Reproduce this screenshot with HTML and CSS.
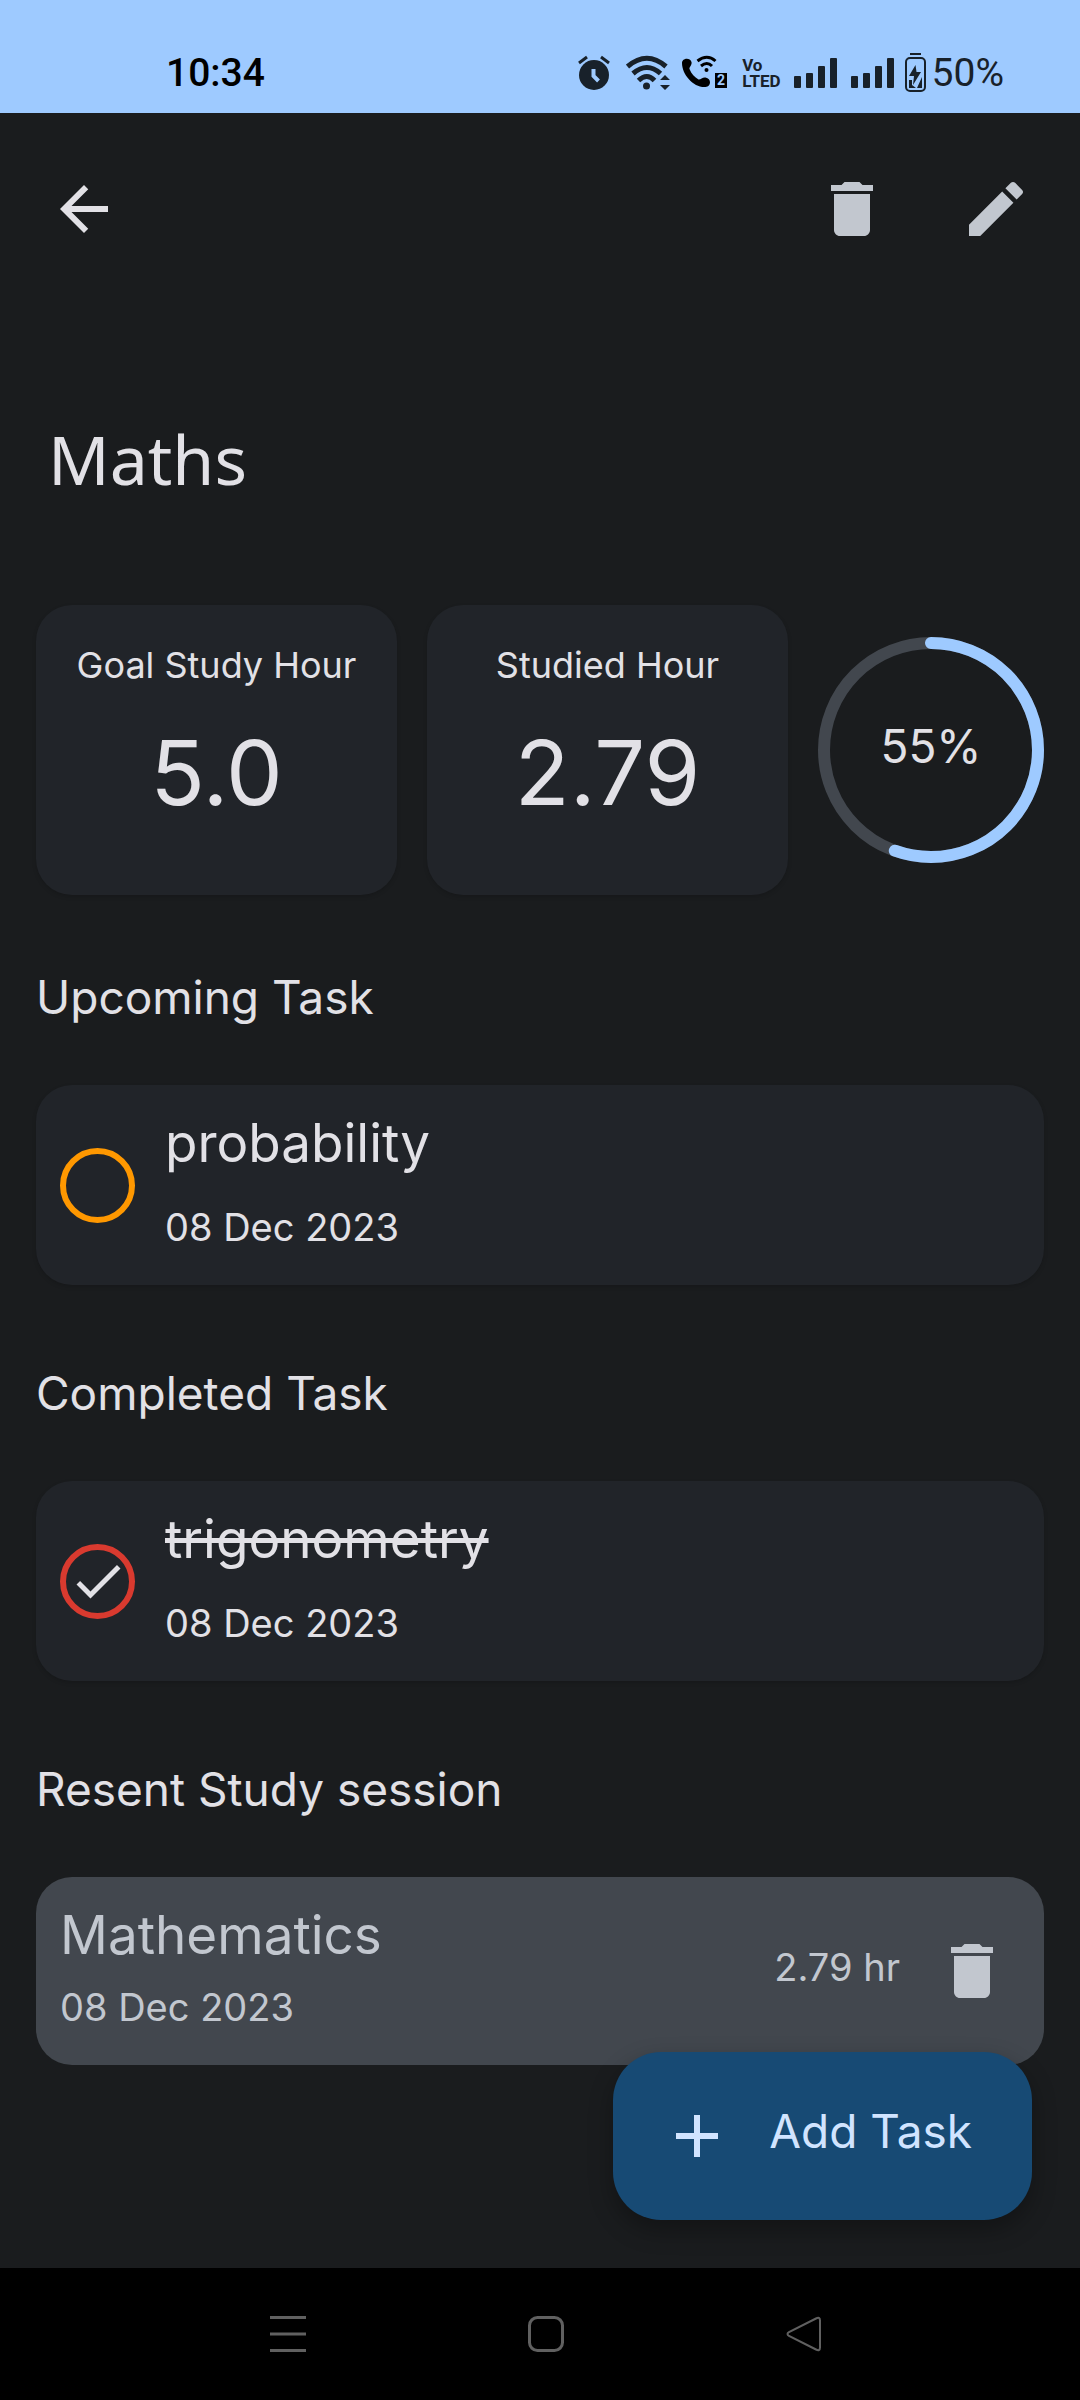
FILE: index.html
```html
<!DOCTYPE html>
<html lang="en">
<head>
<meta charset="utf-8">
<meta name="viewport" content="width=device-width, initial-scale=1">
<title>Maths</title>
<link rel="stylesheet" href="styles.css">
</head>
<body>
<svg class="defs" aria-hidden="true">
  <symbol id="trash" viewBox="0 0 24 24"><path d="M6 19c0 1.100.9 2 2 2h8c1.100 0 2-.9 2-2V7H6v12zM19 4h-3.500l-1-1h-5l-1 1H5v2h14V4z"/></symbol>
  <symbol id="signal" viewBox="0 0 43 30"><rect x="0" y="18" width="7" height="12" rx="1"/><rect x="12" y="15" width="7" height="15" rx="1"/><rect x="24" y="8" width="7" height="22" rx="1"/><rect x="36" y="0" width="7" height="30" rx="1"/></symbol>
</svg>

<div class="status">
  <time class="status-time">10:34</time>
  <div class="status-icons">
    <svg class="alarm" viewBox="0 0 32 36" aria-hidden="true">
      <circle cx="16" cy="20" r="15"/>
      <path class="line" d="M1 8l8-6M31 8l-8-6"/>
      <path class="cut" d="M15.500 14v7l5 5"/>
    </svg>
    <svg class="wifi" viewBox="0 0 44 36" aria-hidden="true">
      <g class="arc"><path d="M1.500 11.500Q21 -5 40 11.500"/><path d="M7 18.500Q21 6.500 34.500 18.500"/><path d="M12.500 25.500Q21 17.500 28.500 25.500"/></g>
      <circle cx="20.500" cy="31" r="3.500"/>
      <path d="M34 25l5-5 5 5zM34 30l5 5 5-5z"/>
    </svg>
    <svg class="call" viewBox="0 0 47 36" aria-hidden="true">
      <path d="M1 8C1 3 9 2 10.500 7c.8 3-2.500 5-2 7 2 5 5 8 9 10.500 2 .5 4-2.500 7-2 6 1 6 9 0 9.500C13 33 1 20 1 8z"/>
      <g class="arc thin"><path d="M16.500 6Q26-1.500 34.500 6"/><path d="M20 11Q26 6 31 11"/></g>
      <circle cx="25.500" cy="15" r="2"/>
      <rect x="34" y="18" width="12" height="15"/>
      <text class="sim" x="40" y="30">2</text>
    </svg>
    <div class="volte"><span>Vo</span><span>LTED</span></div>
    <svg class="signal first" aria-hidden="true"><use href="#signal"/></svg>
    <svg class="signal" aria-hidden="true"><use href="#signal"/></svg>
    <svg class="battery" viewBox="0 0 21 39" aria-hidden="true">
      <rect x="5" y="0" width="11" height="2"/>
      <rect class="shell" x="1" y="5" width="19" height="33" rx="4"/>
      <path d="M10.500 12L4 23h5l-1 9 8-13h-4.500zM4 27h3v5l4 3H4zM17 24v11h-5z"/>
    </svg>
    <span class="percent">50%</span>
  </div>
</div>

<main class="screen">
  <header class="appbar">
    <button class="icon-btn back" aria-label="Back"><svg class="icon" viewBox="0 0 24 24"><path d="M20 11H7.830l5.590-5.590L12 4l-8 8 8 8 1.410-1.410L7.830 13H20v-2z"/></svg></button>
    <button class="icon-btn" aria-label="Delete subject"><svg class="icon"><use href="#trash"/></svg></button>
    <button class="icon-btn" aria-label="Edit subject"><svg class="icon" viewBox="0 0 24 24"><path d="M3 17.250V21h3.750L17.810 9.940l-3.750-3.750L3 17.250zM20.710 7.040c.39-.39.39-1.020 0-1.410l-2.340-2.340c-.39-.39-1.020-.39-1.410 0l-1.830 1.830 3.750 3.750 1.830-1.830z"/></svg></button>
  </header>
  <h1 class="title">Maths</h1>

  <section class="stats">
    <div class="card stat"><span class="stat-label">Goal Study Hour</span><span class="stat-value">5.0</span></div>
    <div class="card stat"><span class="stat-label">Studied Hour</span><span class="stat-value">2.79</span></div>
    <div class="ring">
      <svg class="ring-art" viewBox="0 0 226 226" aria-hidden="true">
        <circle class="track" cx="113" cy="113" r="107"/>
        <circle class="progress" cx="113" cy="113" r="107" pathLength="100" transform="rotate(-90 113 113)"/>
      </svg>
      <span class="ring-text">55%</span>
    </div>
  </section>

  <section>
    <h2 class="heading first-heading">Upcoming Task</h2>
    <div class="card task">
      <input class="check" type="checkbox" id="t1">
      <label class="info" for="t1"><span class="name">probability</span><span class="date">08 Dec 2023</span></label>
    </div>
  </section>

  <section>
    <h2 class="heading">Completed Task</h2>
    <div class="card task done">
      <span class="check-wrap">
        <input class="check" type="checkbox" id="t2" checked>
        <svg class="tick" viewBox="0 0 24 24" aria-hidden="true"><path d="M9 16.170L4.830 12l-1.420 1.410L9 19 21 7l-1.410-1.410z"/></svg>
      </span>
      <label class="info" for="t2"><span class="name">trigonometry</span><span class="date">08 Dec 2023</span></label>
    </div>
  </section>

  <section>
    <h2 class="heading">Resent Study session</h2>
    <div class="card session">
      <div class="info"><span class="name">Mathematics</span><span class="date">08 Dec 2023</span></div>
      <span class="hours">2.79 hr</span>
      <button class="icon-btn" aria-label="Delete session"><svg class="icon"><use href="#trash"/></svg></button>
    </div>
  </section>

  <button class="fab"><svg class="icon" viewBox="0 0 24 24" aria-hidden="true"><path d="M19 13h-6v6h-2v-6H5v-2h6V5h2v6h6v2z"/></svg><span class="fab-label">Add Task</span></button>
</main>

<nav class="navbar">
  <button class="nav-btn" aria-label="Recent apps"><svg class="nav-icon" viewBox="0 0 36 36"><path d="M0 1.500h36M0 18h36M0 34.500h36"/></svg></button>
  <button class="nav-btn" aria-label="Home"><svg class="nav-icon" viewBox="0 0 36 36"><rect x="1.500" y="1.500" width="33" height="33" rx="8"/></svg></button>
  <button class="nav-btn" aria-label="Back"><svg class="nav-icon thin" viewBox="0 0 36 36"><path d="M30 2.500L3 16q-3 2 0 4l27 13.500q4 2 4-2v-27q0-4-4-2z"/></svg></button>
</nav>
</body>
</html>
```
FILE: styles.css
```css
* { box-sizing: border-box; }

body {
  margin: 0;
  min-height: 100vh;
  display: flex;
  flex-direction: column;
  background: #1a1c1e;
  color: #e2e1e6;
  font-family: Inter, "Open Sans", sans-serif;
  font-optical-sizing: none;
}

button {
  border: 0;
  padding: 0;
  background: none;
  color: inherit;
  font: inherit;
}

svg { display: block; fill: currentColor; flex: none; }
.defs { position: absolute; width: 0; height: 0; }

/* Status bar */
.status {
  height: 113px;
  padding: 32px 76px 0 166px;
  display: flex;
  align-items: center;
  justify-content: space-between;
  background: #9ecaff;
  color: #18212a;
  font: 39px/48px Roboto, sans-serif;
}
.status-time { color: #000; font-weight: 500; }
.status-icons { display: flex; align-items: center; }
.alarm { width: 32px; height: 36px; margin-right: 16px; }
.alarm .line { stroke: currentColor; stroke-width: 3; }
.alarm .cut { fill: none; stroke: #9ecaff; stroke-width: 4; }
.wifi { width: 44px; height: 36px; margin-right: 11px; }
.arc { fill: none; stroke: currentColor; stroke-width: 5; }
.arc.thin { stroke-width: 3; }
.call { width: 47px; height: 36px; margin-right: 14px; color: #000; }
.sim { fill: #9ecaff; font: bold 14px Roboto, sans-serif; text-anchor: middle; }
.volte {
  display: flex;
  flex-direction: column;
  margin-right: 13px;
  font: bold 17px/16px "Liberation Sans Narrow", Roboto, sans-serif;
}
.signal { width: 43px; height: 30px; margin-right: 11px; }
.signal.first { margin-right: 14px; }
.battery { width: 21px; height: 39px; margin-right: 6px; }
.shell { fill: none; stroke: currentColor; stroke-width: 2; }

/* App bar */
.screen { flex: 1; position: relative; padding: 0 36px; }
.appbar { height: 192px; margin: 0 -24px; display: flex; align-items: center; color: #c2c7cf; }
.icon-btn { width: 144px; height: 144px; display: grid; place-items: center; }
.icon { width: 72px; height: 72px; }
.back { margin-right: auto; color: #e2e1e6; }
.title {
  margin: 0;
  padding: 106px 12px 98px;
  font: 68px/96px "Noto Sans", sans-serif;
}

/* Statistics */
.stats { display: flex; align-items: center; gap: 30px; }
.card { border-radius: 36px; background: #212429; box-shadow: 0 2px 4px rgba(0, 0, 0, .15); }
.stat {
  flex: 1;
  height: 290px;
  padding: 36px 0;
  display: flex;
  flex-direction: column;
  align-items: center;
}
.stat-label { font-size: 36px; line-height: 48px; }
.stat-value { margin-top: 36px; font-size: 90px; line-height: 96px; }
.ring { width: 226px; height: 226px; display: grid; place-items: center; }
.ring-art, .ring-text { grid-area: 1 / 1; }
.ring-art { width: 226px; height: 226px; fill: none; stroke-width: 12; }
.track { stroke: #42474e; }
.progress { stroke: #9ecaff; stroke-linecap: round; stroke-dasharray: 55.500 100; }
.ring-text { padding-bottom: 8px; font-size: 46px; line-height: 60px; }

/* Sections */
.heading { margin: 0; padding: 78px 0 58px; font-size: 46px; font-weight: 400; line-height: 60px; }
.first-heading { padding-top: 72px; }
.task { height: 200px; padding: 0 24px; display: flex; align-items: center; gap: 30px; }
.check {
  appearance: none;
  flex: none;
  display: block;
  width: 75px;
  height: 75px;
  margin: 0;
  border: 6px solid #ff9800;
  border-radius: 50%;
}
.done .check { border-color: #d93a2f; }
.check-wrap { display: grid; place-items: center; }
.check-wrap > * { grid-area: 1 / 1; }
.tick { width: 60px; height: 60px; pointer-events: none; }
.info { display: flex; flex-direction: column; gap: 18px; padding-bottom: 6px; }
.name { font-size: 53px; line-height: 72px; }
.date, .hours { font-size: 38px; line-height: 60px; }
.done .name { text-decoration: line-through; }

.session {
  height: 188px;
  padding-left: 24px;
  display: flex;
  align-items: center;
  background: #42474e;
  color: #c2c7cf;
  box-shadow: none;
}
.session .info { flex: 1; gap: 6px; }
.hours { padding-bottom: 8px; }

.fab {
  position: absolute;
  right: 48px;
  bottom: 48px;
  height: 168px;
  padding: 0 60px 0 48px;
  display: flex;
  align-items: center;
  gap: 36px;
  border-radius: 48px;
  background: #174a74;
  color: #d1e4ff;
  font-size: 46px;
  line-height: 60px;
  box-shadow: 0 10px 24px rgba(0, 0, 0, .3);
}
.fab-label { padding-bottom: 10px; }

/* System navigation */
.navbar { height: 132px; padding: 0 147px 0 159px; display: flex; background: #000; color: #606060; }
.nav-btn { flex: 1; display: grid; place-items: center; }
.nav-icon { width: 36px; height: 36px; fill: none; stroke: currentColor; stroke-width: 3; }
.nav-icon.thin { stroke-width: 2; }
```
